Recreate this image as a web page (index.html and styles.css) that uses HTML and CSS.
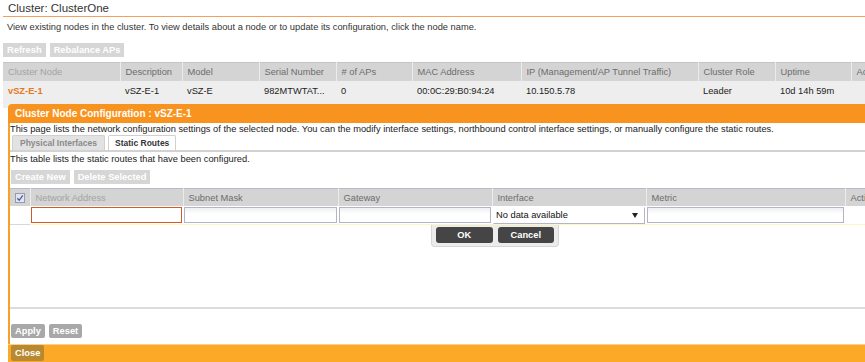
FILE: index.html
```html
<!DOCTYPE html>
<html lang="en">
<head>
    <meta charset="UTF-8">
    <title>Cluster: ClusterOne</title>
    <link rel="stylesheet" href="styles.css">
</head>
<body>
    <div class="page">
        <h1 class="page-title">Cluster: ClusterOne</h1>
        <p class="intro">View existing nodes in the cluster. To view details about a node or to update its configuration, click the node name.</p>
        <div class="toolbar">
            <button class="btn btn-soft">Refresh</button>
            <button class="btn btn-soft">Rebalance APs</button>
        </div>
        <table class="grid nodes">
            <colgroup>
                <col style="width:117px"><col style="width:62px"><col style="width:77px"><col style="width:77px">
                <col style="width:76px"><col style="width:109px"><col style="width:177px"><col style="width:77px">
                <col style="width:76px"><col style="width:100px">
            </colgroup>
            <thead>
                <tr>
                    <th class="muted">Cluster Node</th>
                    <th>Description</th>
                    <th>Model</th>
                    <th>Serial Number</th>
                    <th># of APs</th>
                    <th>MAC Address</th>
                    <th>IP (Management/AP Tunnel Traffic)</th>
                    <th>Cluster Role</th>
                    <th>Uptime</th>
                    <th>Actions</th>
                </tr>
            </thead>
            <tbody>
                <tr>
                    <td><a class="node-link" href="#">vSZ-E-1</a></td>
                    <td>vSZ-E-1</td>
                    <td>vSZ-E</td>
                    <td>982MTWTAT...</td>
                    <td>0</td>
                    <td>00:0C:29:B0:94:24</td>
                    <td>10.150.5.78</td>
                    <td>Leader</td>
                    <td>10d 14h 59m</td>
                    <td></td>
                </tr>
            </tbody>
        </table>
    </div>

    <!-- 节点配置弹窗 -->
    <div class="dialog">
        <div class="dialog-header">Cluster Node Configuration : vSZ-E-1</div>
        <div class="dialog-body">
            <p class="note">This page lists the network configuration settings of the selected node. You can the modify interface settings, northbound control interface settings, or manually configure the static routes.</p>
            <div class="tabs">
                <span class="tab">Physical Interfaces</span>
                <span class="tab tab-active">Static Routes</span>
            </div>
            <p class="note">This table lists the static routes that have been configured.</p>
            <div class="toolbar">
                <button class="btn btn-soft">Create New</button>
                <button class="btn btn-soft">Delete Selected</button>
            </div>
            <div class="routes-area">
                <table class="grid routes">
                    <colgroup>
                        <col style="width:20px"><col style="width:153px"><col style="width:155px"><col style="width:154px">
                        <col style="width:154px"><col style="width:199px"><col style="width:100px">
                    </colgroup>
                    <thead>
                        <tr>
                            <th class="check-cell">
                                <svg class="check" width="10" height="10" viewBox="0 0 10 10">
                                    <rect x="0.5" y="0.5" width="9" height="9" fill="#e4e4ec" stroke="#9a9aae"/>
                                    <path d="M2.3 5.2 L4.2 7.3 L7.8 2.3" fill="none" stroke="#3a5fb0" stroke-width="1.3"/>
                                </svg>
                            </th>
                            <th class="muted">Network Address</th>
                            <th>Subnet Mask</th>
                            <th>Gateway</th>
                            <th>Interface</th>
                            <th>Metric</th>
                            <th>Action</th>
                        </tr>
                    </thead>
                    <tbody>
                        <tr class="edit-row">
                            <td></td>
                            <td><input class="field field-error" type="text"></td>
                            <td><input class="field" type="text"></td>
                            <td><input class="field" type="text"></td>
                            <td>
                                <div class="select">
                                    <span>No data available</span>
                                    <svg width="6" height="5" viewBox="0 0 6 5"><path d="M0 0 H6 L3 5 Z" fill="#222"/></svg>
                                </div>
                            </td>
                            <td><input class="field" type="text"></td>
                            <td></td>
                        </tr>
                    </tbody>
                </table>
                <div class="row-actions">
                    <button class="btn btn-dark">OK</button>
                    <button class="btn btn-dark">Cancel</button>
                </div>
            </div>
            <div class="toolbar form-actions">
                <button class="btn btn-grey">Apply</button>
                <button class="btn btn-grey">Reset</button>
            </div>
        </div>
        <div class="dialog-footer">
            <button class="btn btn-close">Close</button>
        </div>
    </div>
</body>
</html>
```

FILE: styles.css
```css
body {
    margin: 0;
    font-family: "Liberation Sans", Arial, sans-serif;
    font-size: 9.3px;
    color: #222;
    background: #fff;
    overflow: hidden;
    height: 362px;
}
.page {
    padding-left: 3px;
    height: 362px;
}
.page-title {
    margin: 0;
    height: 16px;
    padding-left: 5px;
    font-size: 11.5px;
    font-weight: normal;
    line-height: 16px;
    color: #333;
    border-bottom: 1px solid #f0a060;
}
.intro {
    margin: 3px 0 0 0;
    padding-left: 4px;
    line-height: 14px;
    color: #333;
}
.toolbar {
    display: flex;
    gap: 4px;
    margin-top: 9px;
}
.btn {
    font-family: "Liberation Sans", Arial, sans-serif;
    font-size: 9.3px;
    font-weight: bold;
    color: #fff;
    border: none;
    padding: 0 4px;
    height: 14px;
    line-height: 14px;
    cursor: pointer;
}
.btn-soft {
    background-color: #d6d6d6;
}
.btn-grey {
    background-color: #a8a8a8;
    border-radius: 2px;
}
.btn-dark {
    background-color: #454545;
    border-radius: 3px;
    height: 16px;
    width: 57px;
}
.btn-close {
    background-color: #b88930;
    border-radius: 2px;
    height: 16px;
    padding: 0 4px;
}

/* 表格 */
.grid {
    border-collapse: collapse;
    table-layout: fixed;
}
.grid th {
    background-color: #d4d4d4;
    color: #6c6c6c;
    font-weight: normal;
    text-align: left;
    padding: 0 0 0 5px;
    border-right: 1px solid #ececec;
    white-space: nowrap;
    overflow: hidden;
}
.grid th.muted {
    color: #a3a3a3;
}
.grid td {
    white-space: nowrap;
    overflow: hidden;
}
.nodes {
    margin-top: 5px;
    width: 948px;
}
.nodes th {
    height: 18px;
    border-top: 1px solid #c4c4c4;
}
.nodes td {
    background-color: #eeeeee;
    height: 24px;
    vertical-align: top;
    padding: 3px 0 0 5px;
    line-height: 14px;
    color: #222;
}
.node-link {
    color: #e8771e;
    text-decoration: none;
    font-weight: bold;
}

/* 弹窗 */
.dialog {
    position: absolute;
    left: 8px;
    top: 104px;
    width: 900px;
    height: 258px;
    display: flex;
    flex-direction: column;
    background: #fff;
    border-radius: 4px 4px 0 0;
    overflow: hidden;
}
.dialog-header {
    height: 19px;
    line-height: 20px;
    padding-left: 7px;
    background-color: #f7931e;
    color: #fff;
    font-size: 10px;
    font-weight: bold;
}
.dialog-body {
    flex: 1;
    border-left: 2px solid #f7a12b;
}
.note {
    margin: 0;
    line-height: 12px;
    color: #222;
    white-space: nowrap;
}
.tabs {
    display: flex;
    gap: 3px;
    padding-left: 2px;
    border-bottom: 2px solid #d2d2d2;
    height: 15px;
}
.tab {
    font-size: 8.5px;
    font-weight: bold;
    color: #8a8a8a;
    background-color: #e2e2e2;
    border: 1px solid #d0d0d0;
    border-bottom: none;
    border-radius: 2px 2px 0 0;
    padding: 0 7px;
    line-height: 15px;
    white-space: nowrap;
}
.tab-active {
    background-color: #fff;
    color: #333;
    padding: 0 6px;
}
.tabs + .note {
    margin-top: 1px;
}
.dialog-body > .toolbar {
    margin-top: 5px;
    padding-left: 1px;
}
.dialog-body > .form-actions {
    margin-top: 15px;
}
.routes-area {
    margin-top: 4px;
    height: 119px;
    border-bottom: 2px solid #dcdcdc;
}
.routes {
    width: 935px;
}
.routes th {
    height: 17px;
    border-top: 1px solid #b9b9c6;
}
.routes th.check-cell {
    padding: 0;
    vertical-align: middle;
}
.check {
    display: block;
    margin: 1px 0 0 5px;
}
.edit-row td {
    height: 18px;
    padding: 0 1px;
    border-bottom: 1px solid #fbf7c4;
}
.edit-row td:first-child {
    border-bottom-color: #d8d8d8;
}
.field {
    display: block;
    box-sizing: border-box;
    width: 100%;
    height: 16px;
    margin: 0;
    border: 1px solid #b4b4c6;
    background: linear-gradient(#eef0f2, #fff 6px);
    font-size: 9.3px;
}
.field-error {
    border-color: #d4592a;
    background: #fff;
}
.select {
    display: flex;
    align-items: center;
    justify-content: space-between;
    box-sizing: border-box;
    height: 17px;
    padding: 0 6px 0 2px;
    border: 1px solid #b4b4c6;
    border-left-color: #fff;
    border-top-color: #fff;
    color: #111;
}
.row-actions {
    display: flex;
    gap: 5px;
    width: 118px;
    margin-left: 421px;
    padding: 2px 4px 3px 4px;
    background-color: #ececec;
    border: 1px solid #d6d6d6;
    border-top: none;
    border-radius: 0 0 4px 4px;
}
.dialog-footer {
    height: 17px;
    background-color: #fca927;
    border-top: 1px solid #fdd08a;
    padding-left: 3px;
}
```
